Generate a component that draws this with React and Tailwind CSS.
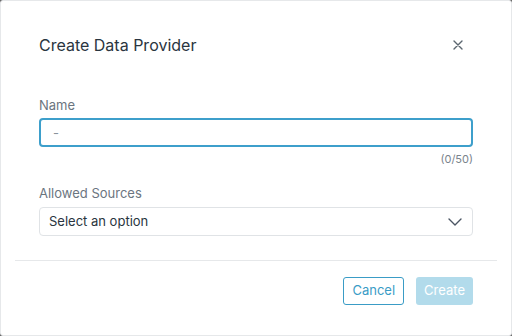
import React, { useState } from 'react';

const CloseIcon = () => (
  <svg width="10" height="10" viewBox="0 0 10 10" fill="none">
    <path d="M1 1l8 8M9 1l-8 8" stroke="#5b6670" strokeWidth="1.4" strokeLinecap="round" />
  </svg>
);

const ChevronDown = () => (
  <svg width="14" height="8" viewBox="0 0 14 8" fill="none">
    <path d="M1 1l6 6 6-6" stroke="#4b5563" strokeWidth="1.4" strokeLinecap="round" strokeLinejoin="round" />
  </svg>
);

const App = () => {
  const [name, setName] = useState('');

  return (
    <div className="w-[512px] h-[336px] bg-[#6b6b6b] font-['Inter',sans-serif]">
      <div className="w-full h-full bg-white border border-[#e6e8ea] rounded-[3px] flex flex-col">
        <div className="flex items-center justify-between pl-[38px] pr-[46px] pt-[33px]">
          <h2 className="text-[16px] leading-[22px] text-[#2a3540]">Create Data Provider</h2>
          <button className="w-[14px] h-[14px] flex items-center justify-center">
            <CloseIcon />
          </button>
        </div>

        <div className="px-[38px] pt-[40px]">
          <label className="block text-[13px] leading-[18px] text-[#6b7580] mb-[4px]">Name</label>
          <input
            type="text"
            placeholder="-"
            value={name}
            onChange={(e) => setName(e.target.value)}
            className="w-full h-[29px] px-[12px] border-2 border-[#3d9fcb] rounded-[4px] text-[13px] text-[#2a3540] placeholder:text-[#8a939c] outline-none"
          />
          <div className="text-right text-[11px] leading-[14px] text-[#7a838c] mt-[5px]">(0/50)</div>

          <label className="block text-[13px] leading-[18px] text-[#6b7580] mt-[18px] mb-[5px]">Allowed Sources</label>
          <button className="w-full h-[29px] pl-[9px] pr-[10px] border border-[#e0e3e6] rounded-[4px] flex items-center justify-between">
            <span className="text-[13px] text-[#2a3540]">Select an option</span>
            <ChevronDown />
          </button>
        </div>

        <div className="mx-[14px] mt-[24px] border-t border-[#e6e8ea]" />

        <div className="flex justify-end gap-[12px] px-[38px] pt-[16px]">
          <button className="h-[28px] px-[8px] border border-[#3a9cc6] rounded-[3px] text-[13px] text-[#3a9cc6] bg-white">
            Cancel
          </button>
          <button className="h-[28px] px-[8px] rounded-[3px] text-[13px] text-white bg-[#b2dbeb]">
            Create
          </button>
        </div>
      </div>
    </div>
  );
};

export default App;
